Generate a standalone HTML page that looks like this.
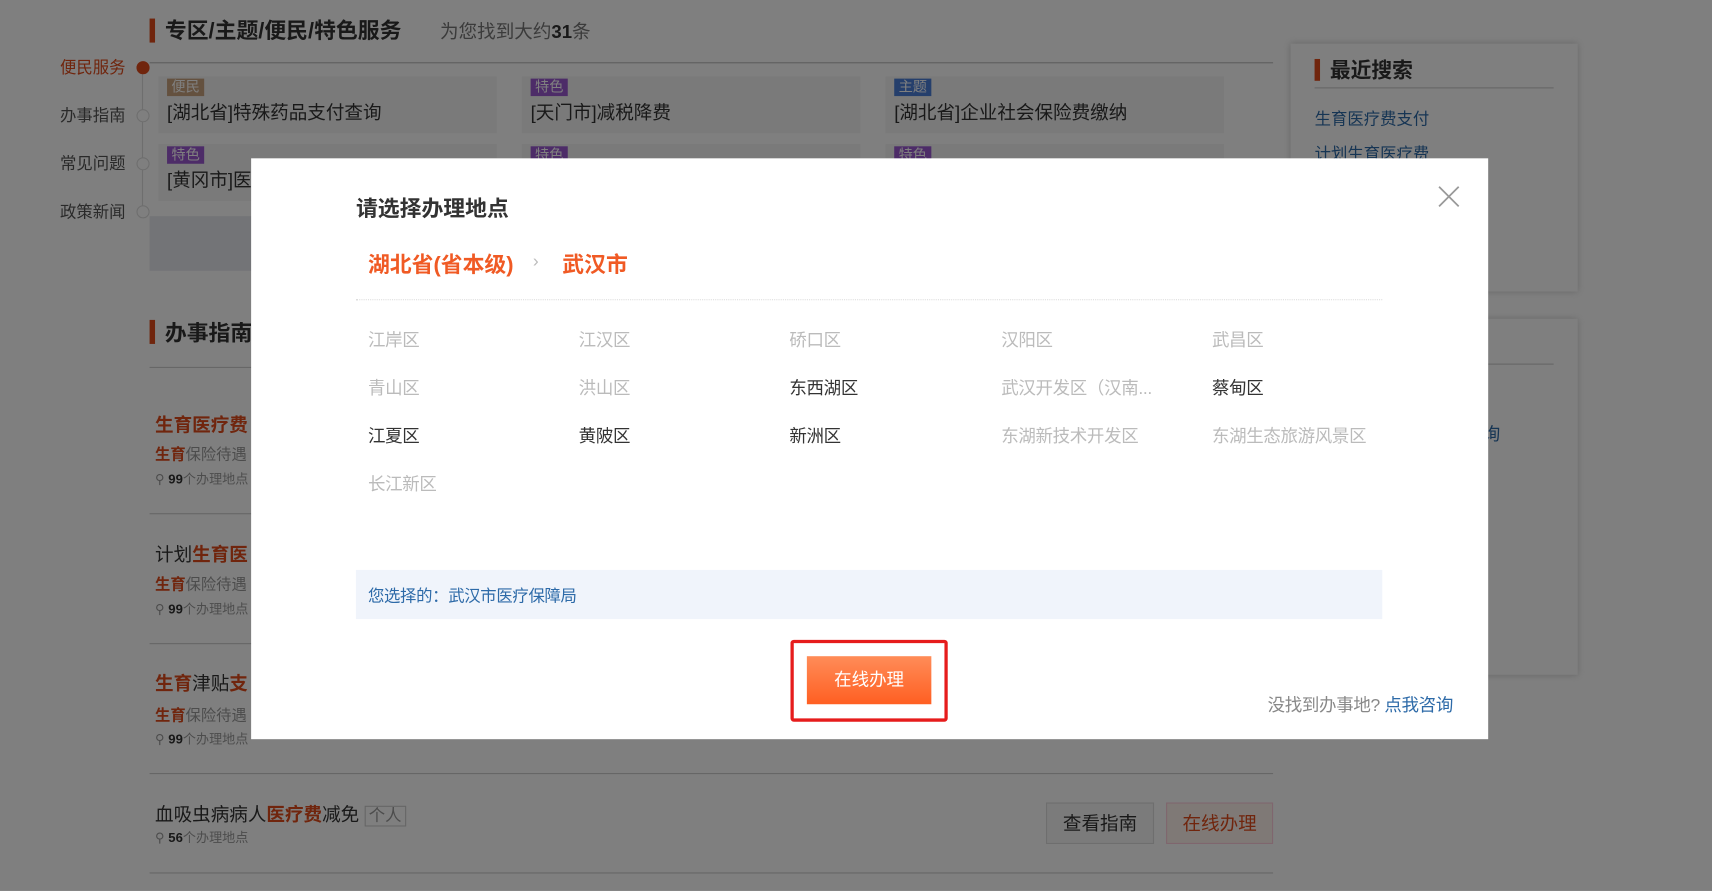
<!DOCTYPE html>
<html><head><meta charset="utf-8"><style>
*{margin:0;padding:0;box-sizing:border-box}
html,body{width:1712px;height:891px;overflow:hidden;background:#fff}
body{font-family:"Liberation Sans","Noto Sans CJK SC",sans-serif}
#w{position:absolute;left:0;top:0;width:1568px;height:816px;transform:scale(1.09184);transform-origin:0 0}
.a{position:absolute;white-space:nowrap}
.bar{position:absolute;width:5px;background:#e04a1a}
.hl{position:absolute;height:1px;background:#ccc}
.card{position:absolute;background:#f4f4f4;width:310px;height:52px}
.tag{position:absolute;left:8px;top:2px;color:#fff;font-size:13px;padding:0 4px;line-height:16px}
.card .t{position:absolute;left:8px;top:19px;font-size:17px;color:#333}
.o{color:#e04a1a;font-weight:bold}
.g{color:#bbb}.k{color:#333}
.d{position:absolute;font-size:16px;line-height:20px;letter-spacing:-0.3px}
</style></head><body><div id="w">
<div class="bar" style="left:137px;top:17px;height:22px"></div>
<div class="a" style="left:151px;top:12px;font-size:20px;font-weight:bold;color:#333">专区/主题/便民/特色服务</div>
<div class="a" style="left:403px;top:15px;font-size:17px;color:#777">为您找到大约<b style="color:#333">31</b>条</div>
<div class="hl" style="left:137px;top:57px;width:1029px;background:#bbb"></div>
<div style="position:absolute;left:130px;top:62px;width:1px;height:132px;background:#ddd"></div>
<div class="a" style="left:55px;top:51px;font-size:15px;color:#e04a1a">便民服务</div>
<div style="position:absolute;left:125px;top:56px;width:12px;height:12px;border-radius:50%;background:#e04a1a"></div>
<div class="a" style="left:55px;top:95px;font-size:15px;color:#555">办事指南</div>
<div class="a" style="left:55px;top:139px;font-size:15px;color:#555">常见问题</div>
<div class="a" style="left:55px;top:183px;font-size:15px;color:#555">政策新闻</div>
<div style="position:absolute;left:125px;top:100px;width:12px;height:12px;border-radius:50%;border:1px solid #ddd;background:#fff"></div>
<div style="position:absolute;left:125px;top:144px;width:12px;height:12px;border-radius:50%;border:1px solid #ddd;background:#fff"></div>
<div style="position:absolute;left:125px;top:188px;width:12px;height:12px;border-radius:50%;border:1px solid #ddd;background:#fff"></div>
<div class="card" style="left:145px;top:70px"><span class="tag" style="background:#c9a27e">便民</span><span class="t">[湖北省]特殊药品支付查询</span></div>
<div class="card" style="left:478px;top:70px"><span class="tag" style="background:#9b59d0">特色</span><span class="t">[天门市]减税降费</span></div>
<div class="card" style="left:811px;top:70px"><span class="tag" style="background:#4a7fd8">主题</span><span class="t">[湖北省]企业社会保险费缴纳</span></div>
<div class="card" style="left:145px;top:132px"><span class="tag" style="background:#9b59d0">特色</span><span class="t">[黄冈市]医</span></div>
<div class="card" style="left:478px;top:132px"><span class="tag" style="background:#9b59d0">特色</span></div>
<div class="card" style="left:811px;top:132px"><span class="tag" style="background:#9b59d0">特色</span></div>
<div style="position:absolute;left:137px;top:198px;width:1029px;height:50px;background:#e6e8ee"></div>
<div class="bar" style="left:137px;top:293px;height:22px"></div>
<div class="a" style="left:151px;top:289px;font-size:20px;font-weight:bold;color:#333">办事指南</div>
<div class="hl" style="left:137px;top:336px;width:1029px"></div>
<div class="a" style="left:142px;top:375px;font-size:17px;color:#e04a1a;font-weight:bold">生育医疗费</div>
<div class="a" style="left:142px;top:406px;font-size:14px;color:#999"><span class="o">生育</span>保险待遇</div>
<div class="a" style="left:142px;top:430px;font-size:12px;color:#999">⚲ <b style="color:#333">99</b>个办理地点</div>
<div class="hl" style="left:137px;top:470px;width:1029px"></div>
<div class="a" style="left:142px;top:494px;font-size:17px;color:#333">计划<span class="o">生育医</span></div>
<div class="a" style="left:142px;top:525px;font-size:14px;color:#999"><span class="o">生育</span>保险待遇</div>
<div class="a" style="left:142px;top:549px;font-size:12px;color:#999">⚲ <b style="color:#333">99</b>个办理地点</div>
<div class="hl" style="left:137px;top:589px;width:1029px"></div>
<div class="a" style="left:142px;top:612px;font-size:17px;color:#333"><span class="o">生育</span>津贴<span class="o">支</span></div>
<div class="a" style="left:142px;top:645px;font-size:14px;color:#999"><span class="o">生育</span>保险待遇</div>
<div class="a" style="left:142px;top:668px;font-size:12px;color:#999">⚲ <b style="color:#333">99</b>个办理地点</div>
<div class="hl" style="left:137px;top:708px;width:1029px"></div>
<div class="a" style="left:142px;top:732px;font-size:17px;color:#333">血吸虫病病人<span class="o">医疗费</span>减免 <span style="border:1px solid #ccc;color:#999;font-size:15px;padding:0 3px">个人</span></div>
<div class="a" style="left:142px;top:758px;font-size:12px;color:#999">⚲ <b style="color:#333">56</b>个办理地点</div>
<div style="position:absolute;left:958px;top:735px;width:99px;height:38px;border:1px solid #ddd;background:#f6f6f6;color:#333;font-size:17px;text-align:center;line-height:38px">查看指南</div>
<div style="position:absolute;left:1068px;top:735px;width:98px;height:38px;border:1px solid #fcd;background:#fff2ec;color:#e04a1a;font-size:17px;text-align:center;line-height:38px">在线办理</div>
<div class="hl" style="left:137px;top:799px;width:1029px"></div>
<div style="position:absolute;left:1182px;top:40px;width:263px;height:227px;background:#fff;box-shadow:0 0 6px #ccc"></div>
<div class="bar" style="left:1204px;top:54px;height:20px"></div>
<div class="a" style="left:1218px;top:50px;font-size:19px;font-weight:bold;color:#333">最近搜索</div>
<div class="hl" style="left:1204px;top:80px;width:219px"></div>
<div class="a" style="left:1204px;top:98px;font-size:15px;color:#2d6aa8">生育医疗费支付</div>
<div class="a" style="left:1204px;top:130px;font-size:15px;color:#2d6aa8">计划生育医疗费</div>
<div style="position:absolute;left:1182px;top:292px;width:263px;height:326px;background:#fff;box-shadow:0 0 6px #ccc"></div>
<div class="hl" style="left:1204px;top:333px;width:219px"></div>
<div class="a" style="left:1358px;top:384px;font-size:16px;color:#2d6aa8">询</div>
<div style="position:absolute;left:0;top:0;width:1568px;height:816px;background:rgba(0,0,0,0.5)"></div>
<div style="position:absolute;left:230px;top:145px;width:1133px;height:532px;background:#fff">
<div class="a" style="left:96px;top:30px;font-size:20px;font-weight:bold;color:#333">请选择办理地点</div>
<svg style="position:absolute;left:1087px;top:25px" width="20" height="20"><path d="M1 1L19 19M19 1L1 19" stroke="#999" stroke-width="1.6"/></svg>
<div class="a" style="left:107px;top:81px;font-size:20px;font-weight:bold;color:#f05a24">湖北省(省本级)</div>
<div class="a" style="left:258px;top:86px;font-size:16px;color:#bbb">›</div>
<div class="a" style="left:285px;top:81px;font-size:20px;font-weight:bold;color:#f05a24">武汉市</div>
<div style="position:absolute;left:96px;top:129px;width:940px;border-top:1px dotted #ddd"></div>
<div class="d g" style="left:107px;top:158px">江岸区</div>
<div class="d g" style="left:300px;top:158px">江汉区</div>
<div class="d g" style="left:493px;top:158px">硚口区</div>
<div class="d g" style="left:687px;top:158px">汉阳区</div>
<div class="d g" style="left:880px;top:158px">武昌区</div>
<div class="d g" style="left:107px;top:202px">青山区</div>
<div class="d g" style="left:300px;top:202px">洪山区</div>
<div class="d k" style="left:493px;top:202px">东西湖区</div>
<div class="d g" style="left:687px;top:202px">武汉开发区（汉南...</div>
<div class="d k" style="left:880px;top:202px">蔡甸区</div>
<div class="d k" style="left:107px;top:246px">江夏区</div>
<div class="d k" style="left:300px;top:246px">黄陂区</div>
<div class="d k" style="left:493px;top:246px">新洲区</div>
<div class="d g" style="left:687px;top:246px">东湖新技术开发区</div>
<div class="d g" style="left:880px;top:246px">东湖生态旅游风景区</div>
<div class="d g" style="left:107px;top:290px">长江新区</div>
<div style="position:absolute;left:96px;top:377px;width:940px;height:45px;background:#f0f4fb"></div>
<div class="d" style="left:107px;top:392px;font-size:15px;color:#2d6aa8">您选择的：武汉市医疗保障局</div>
<div style="position:absolute;left:494px;top:441px;width:144px;height:75px;border:3px solid #e61c1c;border-radius:3px"></div>
<div style="position:absolute;left:509px;top:456px;width:114px;height:44px;background:linear-gradient(#ff8c58,#ff5f22);color:#fff;font-size:16px;text-align:center;line-height:46px">在线办理</div>
<div class="d" style="left:931px;top:492px;color:#888">没找到办事地? <span style="color:#2d6aa8">点我咨询</span></div>
</div>
</div></body></html>
